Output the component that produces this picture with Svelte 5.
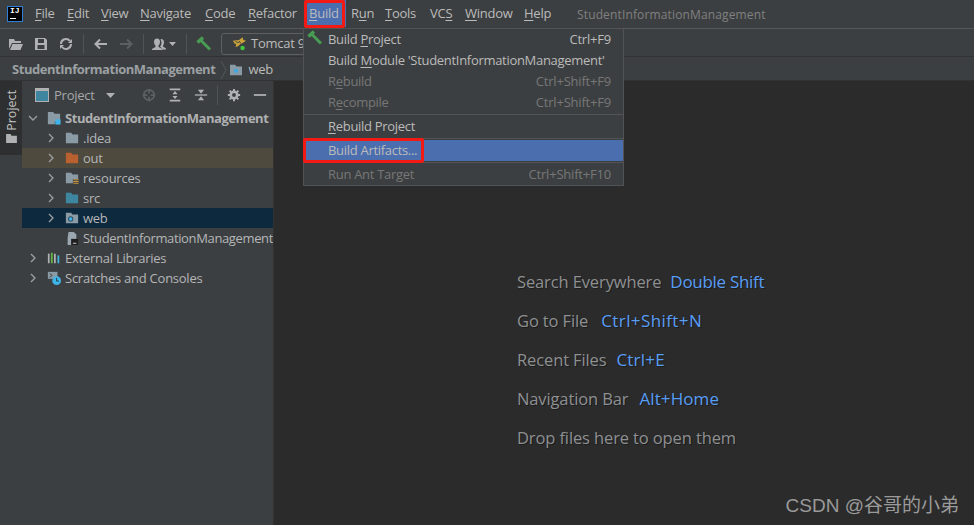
<script>
  const menus = [
    { u: 'F', r: 'ile', w: 32 }, { u: 'E', r: 'dit', w: 34 }, { u: 'V', r: 'iew', w: 39 },
    { u: 'N', r: 'avigate', w: 65 }, { u: 'C', r: 'ode', w: 43 }, { u: 'R', r: 'efactor', w: 61 },
    { u: 'B', r: 'uild', w: 42, on: true }, { p: 'R', u: 'u', r: 'n', w: 34 }, { u: 'T', r: 'ools', w: 45 },
    { p: 'VC', u: 'S', r: '', w: 35 }, { u: 'W', r: 'indow', w: 59 }, { u: 'H', r: 'elp', w: 53 }
  ];
  const tree = [
    { l: 1, name: '.idea', icon: 'grey' },
    { l: 1, name: 'out', icon: 'orange', cls: 'out' },
    { l: 1, name: 'resources', icon: 'res' },
    { l: 1, name: 'src', icon: 'blue' },
    { l: 1, name: 'web', icon: 'web', cls: 'sel' },
    { l: 2, name: 'StudentInformationManagement', icon: 'iml' },
    { l: 0, name: 'External Libraries', icon: 'lib' },
    { l: 0, name: 'Scratches and Consoles', icon: 'scr' }
  ];
  const hints = [
    { t: 'Search Everywhere', k: 'Double Shift', gap: 9, ls: -0.3 },
    { t: 'Go to File', k: 'Ctrl+Shift+N', gap: 13, ls: 0.4 },
    { t: 'Recent Files', k: 'Ctrl+E', gap: 10, ls: 0.2 },
    { t: 'Navigation Bar', k: 'Alt+Home', gap: 11, ls: 0.1 },
    { t: 'Drop files here to open them', k: '' }
  ];
</script>

<div class="ide">
  <header class="menubar">
    <div class="logo"><span class="lj">IJ</span><span class="lbar"></span></div>
    <nav class="menus">
      {#each menus as m}
        <span class="menu" class:on={m.on} style="width:{m.w}px">{m.p ?? ''}<u>{m.u}</u>{m.r}</span>
      {/each}
    </nav>
    <span class="title">StudentInformationManagement</span>
  </header>

  <div class="toolbar">
    <svg class="ti" viewBox="0 0 16 16"><path d="M1 3h5l1 2h6v2H4L1 13zM4.500 8H15l-2.500 6H2z" fill="#afb1b3"/></svg>
    <svg class="ti" viewBox="0 0 16 16"><path fill-rule="evenodd" d="M2 2h10l2 2v10H2zM5 3v4h6V3zM4.500 9v4h7V9z" fill="#afb1b3"/></svg>
    <svg class="ti" viewBox="0 0 16 16"><path d="M3 8a5 5 0 0 1 9-3M13 8a5 5 0 0 1-9 3" fill="none" stroke="#afb1b3" stroke-width="2"/><path d="M10 7l4-4v4zM6 9l-4 4V9z" fill="#afb1b3"/></svg>
    <i class="tsep"></i>
    <svg class="ti" viewBox="0 0 16 16"><path d="M14 8H3M7 3.500L2.500 8 7 12.500" fill="none" stroke="#afb1b3" stroke-width="2"/></svg>
    <svg class="ti" viewBox="0 0 16 16"><path d="M2 8h11M9 3.500L13.500 8 9 12.500" fill="none" stroke="#5d6063" stroke-width="2"/></svg>
    <i class="tsep"></i>
    <svg class="ti wide" viewBox="0 0 26 16"><path d="M6 2.500c2 0 3 1.500 3 3.500s-1 3-1.500 3.500V11l4 2v1H1v-1l3.500-2V9.500C4 9 3 8 3 6s1-3.500 3-3.500zM10 3c2 0 3 1.500 3 3.500 0 2-1 3-1 3v1l3 2v1h-3l-3-3c1-1 1.500-2.500 1.500-4 0-1-.5-2-1-3z" fill="#afb1b3"/><path d="M18 6h7l-3.500 4z" fill="#afb1b3"/></svg>
    <i class="tsep"></i>
    <svg class="ti" viewBox="0 0 16 16"><path d="M1.500 6.500L7 1.500" stroke="#499c54" stroke-width="3.500" fill="none"/><path d="M5 4.500L14 13.500" stroke="#499c54" stroke-width="3" fill="none"/></svg>
    <div class="runcfg">
      <svg class="cat" viewBox="0 0 18 16"><path d="M2 5l7-1 4-3 1 3 3 1-3 2-4 2-2 2-3 1 1-3-2-1z" fill="#c9a13b"/><path d="M5 6l4 1M9 5l2 3" stroke="#3c3f41"/><circle cx="13" cy="13" r="2.500" fill="#3ec63e"/></svg>
      <span>Tomcat 9</span>
    </div>
  </div>

  <div class="crumbs">
    <b>StudentInformationManagement</b>
    <svg class="chev" viewBox="0 0 8 20"><path d="M1 1l5 9-5 9" fill="none" stroke="#55585a"/></svg>
    <svg class="fi" viewBox="0 0 16 14"><path d="M1 1h6l1.500 2H15v10H1z" fill="#8a9ba6"/><circle cx="8" cy="8" r="2.500" fill="#3fa9e0"/></svg>
    <span>web</span>
  </div>

  <div class="body">
    <aside class="stripe">
      <div class="stab">
        <span class="vt">Project</span>
        <svg class="stabi" viewBox="0 0 12 10"><path d="M0 0h5l1 2h6v8H0z" fill="#afb1b3"/></svg>
      </div>
    </aside>

    <section class="panel">
      <div class="phead">
        <svg class="pv" viewBox="0 0 14 14"><rect x=".5" y=".5" width="13" height="13" fill="#3e86a0" stroke="#afb1b3"/><rect x="0" y="0" width="14" height="3" fill="#afb1b3"/></svg>
        <span class="pname">Project</span>
        <svg class="caret" viewBox="0 0 9 5"><path d="M0 0h9L4.500 5z" fill="#afb1b3"/></svg>
        <span class="pspace"></span>
        <svg class="pi" viewBox="0 0 16 16"><circle cx="8" cy="8" r="6" fill="none" stroke="#5d6063" stroke-width="2"/><path d="M8 1v5M8 10v5M1 8h5M10 8h5" stroke="#5d6063" stroke-width="2"/></svg>
        <svg class="pi" viewBox="0 0 16 16"><path d="M2 1.500h12M2 14.500h12" stroke="#afb1b3" stroke-width="2"/><path d="M8 3.500L11 7H5zM8 12.500L5 9h6z" fill="#afb1b3"/></svg>
        <svg class="pi coll" viewBox="0 0 16 16"><path d="M1 8h14" stroke="#afb1b3" stroke-width="1.500"/><path d="M8 6.500L4.500 2h7zM8 9.500l3.500 4.500h-7z" fill="#afb1b3"/></svg>
        <i class="psep"></i>
        <svg class="pi" viewBox="0 0 16 16"><circle cx="8" cy="8" r="3.700" fill="none" stroke="#afb1b3" stroke-width="3"/><path d="M8 1v3M8 12v3M1 8h3M12 8h3M3 3l2 2M11 11l2 2M13 3l-2 2M5 11l-2 2" stroke="#afb1b3" stroke-width="2.200"/></svg>
        <svg class="pi" viewBox="0 0 16 16"><path d="M1 8h14" stroke="#afb1b3" stroke-width="2"/></svg>
      </div>

      <div class="tree">
        <div class="row root">
          <svg class="arrow" viewBox="0 0 10 10"><path d="M1 3l4 4 4-4" fill="none" stroke="#9da0a2" stroke-width="1.300"/></svg>
          <svg class="ic" viewBox="0 0 16 16"><path d="M1 1h6l1.500 2H15v9H9v3H1z" fill="#8a9ba6"/><rect x="9.500" y="9.500" width="6" height="6" fill="#3fb4e8"/></svg>
          <b>StudentInformationManagement</b>
        </div>
        {#each tree as t}
          <div class="row l{t.l} {t.cls ?? ''}">
            {#if t.l !== 2}
              <svg class="arrow" viewBox="0 0 10 10"><path d="M3 1l4 4-4 4" fill="none" stroke="#9da0a2" stroke-width="1.300"/></svg>
            {/if}
            {#if t.icon === 'grey'}
              <svg class="ic" viewBox="0 0 16 16"><path d="M1 2h6l1.500 2H15v10H1z" fill="#8a9ba6"/></svg>
            {:else if t.icon === 'orange'}
              <svg class="ic" viewBox="0 0 16 16"><path d="M1 2h6l1.500 2H15v10H1z" fill="#b8602f"/></svg>
            {:else if t.icon === 'blue'}
              <svg class="ic" viewBox="0 0 16 16"><path d="M1 2h6l1.500 2H15v10H1z" fill="#3e86a0"/></svg>
            {:else if t.icon === 'res'}
              <svg class="ic" viewBox="0 0 16 16"><path d="M1 2h6l1.500 2H15v5H9v5H1z" fill="#8a9ba6"/><path d="M9.500 10h6M9.500 12h6M9.500 14h6" stroke="#d9a343"/></svg>
            {:else if t.icon === 'web'}
              <svg class="ic" viewBox="0 0 16 16"><path d="M1 2h6l1.500 2H15v10H1z" fill="#8a9ba6"/><circle cx="6.500" cy="9" r="3" fill="#2c4a5c"/><circle cx="6.500" cy="9" r="2" fill="#3fb4e8"/></svg>
            {:else if t.icon === 'iml'}
              <svg class="ic" viewBox="0 0 16 16"><path d="M4 1h6l3 3v6H9v6H3V8z" fill="#9aa7b0"/><rect x="7" y="9" width="8" height="7" fill="#1e1e1e"/><path d="M9 14h4" stroke="#ddd"/></svg>
            {:else if t.icon === 'lib'}
              <svg class="ic" viewBox="0 0 16 16"><path d="M2 3v11" stroke="#afb1b3" stroke-width="2"/><path d="M5.500 2v12" stroke="#62b543" stroke-width="2"/><path d="M9 3v11" stroke="#afb1b3" stroke-width="2"/><path d="M13 5v9" stroke="#40b6e0" stroke-width="2"/></svg>
            {:else}
              <svg class="ic" viewBox="0 0 16 16"><path d="M1 1h11v8H1z" fill="#8a9ba6"/><path d="M3 3l3 2-3 2" stroke="#3c3f41" fill="none"/><circle cx="11" cy="11" r="5" fill="#3fb4e8"/><path d="M11 8v3.500h2.500" stroke="#1e2a30" fill="none"/></svg>
            {/if}
            <span>{t.name}</span>
          </div>
        {/each}
      </div>
    </section>

    <main class="editor">
      <ul class="hints">
        {#each hints as h}
          <li>{h.t}{#if h.k}<em style="margin-left:{h.gap}px;letter-spacing:{h.ls}px">{h.k}</em>{/if}</li>
        {/each}
      </ul>
      <div class="mark">CSDN @谷哥的小弟</div>
    </main>
  </div>

  <div class="dropdown">
    <div class="it en"><svg class="ham" viewBox="0 0 16 16"><path d="M1.500 6.500L7 1.500" stroke="#499c54" stroke-width="3.500" fill="none"/><path d="M5 4.500L14 13.500" stroke="#499c54" stroke-width="3" fill="none"/></svg><span>Build <u>P</u>roject</span><kbd>Ctrl+F9</kbd></div>
    <div class="it en"><span>Build <u>M</u>odule 'StudentInformationManagement'</span></div>
    <div class="it dis"><span>R<u>e</u>build</span><kbd>Ctrl+Shift+F9</kbd></div>
    <div class="it dis"><span>R<u>e</u>compile</span><kbd>Ctrl+Shift+F9</kbd></div>
    <hr />
    <div class="it en"><span><u>R</u>ebuild Project</span></div>
    <hr class="tight" />
    <div class="it hl"><span>Build Artifacts...</span></div>
    <hr class="tight" />
    <div class="it dis"><span>Run Ant Target</span><kbd>Ctrl+Shift+F10</kbd></div>
  </div>

  <div class="annot a1"></div>
  <div class="annot a2"></div>
</div>

<style>
  :global(body) { margin: 0; background: #2b2b2b; }
  .ide {
    position: relative; width: 974px; height: 525px; overflow: hidden;
    display: flex; flex-direction: column; background: #3c3f41; color: #bbbbbb;
    font: 13px/17px "Open Sans", "Noto Sans", "Noto Sans CJK SC", sans-serif;
    letter-spacing: -0.25px;
  }
  svg { display: block; flex: none; }
  u { text-underline-offset: 2px; }

  .menubar { height: 28px; flex: none; display: flex; align-items: center; border-bottom: 1px solid #555759; background: #3c3f41; }
  .logo { width: 14px; height: 14px; margin: 0 0 0 7px; background: #000; border: 1px solid #2f7fd6; position: relative; flex: none; box-sizing: content-box; }
  .lj { position: absolute; left: 2px; top: -3px; font: bold 8px/14px "Liberation Mono", monospace; color: #fff; letter-spacing: 0; }
  .lbar { position: absolute; left: 2px; bottom: 2px; width: 6px; height: 1px; background: #fff; }
  .menus { display: flex; margin-left: 12px; width: 534px; flex: none; height: 28px; }
  .menu { display: flex; align-items: center; white-space: pre; flex: none; height: 27px; color: #bbbbbb; }
  .menu.on { background: #4b6eaf; width: 37px !important; padding-left: 4px; margin-right: 5px; margin-left: -4px; }
  .title { color: #808080; font-size: 12px; margin-left: 8px; letter-spacing: 0.14px; }

  .toolbar { height: 28px; flex: none; display: flex; align-items: center; padding: 2px 0 0 8px; gap: 9px; border-bottom: 1px solid #323232; box-sizing: border-box; }
  .ti { width: 16px; height: 16px; }
  .ti.wide { width: 26px; margin-left: -2px; }
  .tsep { width: 1px; height: 20px; background: #515355; flex: none; }
  .runcfg { display: flex; align-items: center; gap: 5px; width: 100px; height: 22px; border: 1px solid #5e6060; border-radius: 3px; padding-left: 9px; box-sizing: border-box; flex: none; }
  .runcfg span { margin-left: -1px; }
  .cat { width: 16px; height: 15px; }

  .crumbs { height: 24px; flex: none; display: flex; align-items: center; padding: 2px 0 0 12px; border-bottom: 1px solid #323232; box-sizing: border-box; }
  .crumbs b { font-weight: 700; color: #9ba0a3; letter-spacing: -0.46px; }
  .chev { width: 8px; height: 20px; margin: 0 1px 0 5px; }
  .fi { width: 14px; height: 12px; margin-right: 5px; }

  .body { flex: 1; display: flex; min-height: 0; }
  .stripe { width: 22px; flex: none; background: #3c3f41; }
  .stab { height: 74px; background: #2d2f30; display: flex; flex-direction: column; align-items: center; padding: 9px 0 0 1px; gap: 3px; box-sizing: border-box; }
  .vt { writing-mode: vertical-rl; transform: rotate(180deg); font-size: 12.500px; line-height: 14px; color: #c4c4c4; letter-spacing: 0; }
  .stabi { width: 11px; height: 9px; }

  .panel { width: 252px; flex: none; background: #3c3f41; border-right: 1px solid #323232; box-sizing: border-box; }
  .phead { height: 27px; display: flex; align-items: center; padding: 1px 0 0 13px; box-sizing: border-box; }
  .pv { width: 14px; height: 14px; }
  .pname { margin-left: 5px; color: #a5a7a9; }
  .caret { width: 9px; height: 5px; margin-left: 11px; }
  .pspace { flex: 1; }
  .pi { width: 14px; height: 14px; margin-right: 12px; }
  .pi:last-child { margin-right: 6px; }
  .pi.coll { margin-right: 9px; }
  .psep { width: 1px; height: 19px; background: #515355; margin-right: 9px; }

  .tree { overflow: hidden; }
  .row { height: 20px; display: flex; align-items: center; position: relative; white-space: nowrap; color: #bbbbbb; }
  .row b { font-weight: 700; color: #aeb0b2; letter-spacing: -0.46px; }
  .arrow { width: 10px; height: 10px; position: absolute; }
  .root .arrow { left: 6px; }
  .root .ic { margin-left: 25px; }
  .l1 .arrow { left: 24px; }
  .l1 .ic { margin-left: 43px; }
  .l2 .ic { margin-left: 43px; }
  .panel .l2 span { letter-spacing: -0.36px; }
  .l0 .arrow { left: 6px; }
  .l0 .ic { margin-left: 25px; }
  .ic { width: 14px; height: 14px; margin-right: 4px; }
  .out { background: #4f4a3e; }
  .sel { background: #0d293e; }
  .panel .row span { color: #b4b6b8; }

  .editor { flex: 1; background: #2b2b2b; position: relative; min-width: 0; }
  .hints { list-style: none; margin: 0; padding: 190px 0 0 243px; }
  .hints li { height: 39px; font-size: 16.500px; line-height: 22px; color: #8e9092; letter-spacing: -0.12px; text-shadow: 1px 1px 0 #1d1d1d; white-space: nowrap; }
  .hints em { font-style: normal; font-size: 17px; color: #589df6; }
  .mark { position: absolute; right: 15px; bottom: 7px; font: 19px/24px "Liberation Sans", "Noto Sans CJK SC", sans-serif; color: #9a9a9a; letter-spacing: 0; }

  .dropdown { position: absolute; left: 303px; top: 28px; width: 321px; height: 158px; box-sizing: border-box; background: #3c3f41; border: 1px solid #515355; display: flex; flex-direction: column; letter-spacing: -0.3px; }
  .it { height: 21px; flex: none; display: flex; justify-content: space-between; align-items: center; padding: 0 12px 0 24px; position: relative; white-space: nowrap; }
  .en { color: #bbbbbb; }
  .dis { color: #777777; }
  .hl { background: #4b6eaf; color: #bbbbbb; height: 21px; }
  .it kbd { font: inherit; letter-spacing: -0.2px; }
  .ham { position: absolute; left: 3px; top: 1px; width: 16px; height: 16px; }
  hr { border: 0; border-top: 1px solid #515355; margin: 1px 0; height: 0; flex: none; }
  hr.tight { margin: 1px 0; }

  .annot { position: absolute; border: 3px solid #f41a14; border-radius: 2px; box-sizing: border-box; }
  .a1 { left: 304px; top: 0; width: 41px; height: 28px; }
  .a2 { left: 303px; top: 138px; width: 121px; height: 25px; }
</style>
